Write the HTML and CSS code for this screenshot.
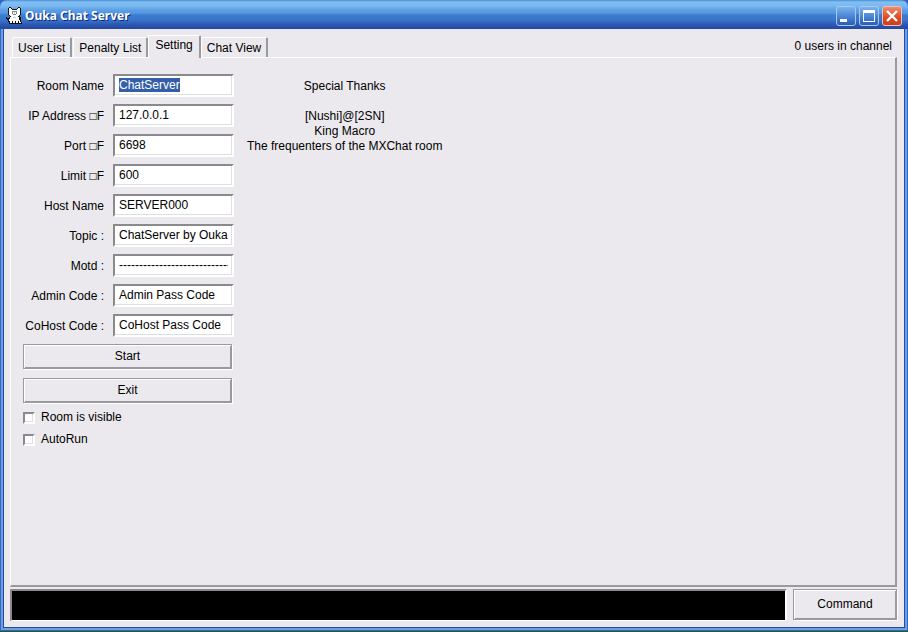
FILE: index.html
```html
<!DOCTYPE html>
<html lang="en">
<head>
<meta charset="utf-8">
<title>Ouka Chat Server</title>
<link rel="stylesheet" href="styles.css">
</head>
<body>
<div class="window">
  <header class="titlebar">
    <svg class="cat" viewBox="0 0 16 17" shape-rendering="crispEdges" aria-hidden="true">
      <path fill="#111" d="M3 0h2v1h1v1h5V1h1V0h2v1h1v7h-1v2h1v5h1v2H3v-2H2v-2H1v-1H0v-2h1v1h2v-1h1V9H3V8H2V1h1z"/>
      <path fill="#fff" d="M3 1h2v1h1v1h5V2h1V1h2v7h-1v1h-1v1h1v3h1v2h1v1h-2v-2h-1v2h-2v-2h-1v2H7v-2H6v2H4v-2H3v-2h1v-2h1V9H4V8H3z"/>
      <path fill="#888" d="M6 4h5v1H6zM6 5h1v2H6zM10 5h1v2h-1zM7 7h3v1H7z"/>
      <path fill="#ccc" d="M8 5h1v2H8zM7 10h3v1H7z"/>
    </svg>
    <h1 class="title">Ouka Chat Server</h1>
    <div class="controls">
      <button class="control" type="button" aria-label="Minimize"><svg viewBox="0 0 18 18" shape-rendering="crispEdges"><path fill="#fff" d="M3 12h7v3H3z"/></svg></button>
      <button class="control" type="button" aria-label="Maximize"><svg viewBox="0 0 18 18" shape-rendering="crispEdges"><path fill="#fff" fill-rule="evenodd" d="M3 3h12v12H3zM4 6v8h10V6z"/></svg></button>
      <button class="control close" type="button" aria-label="Close"><svg viewBox="0 0 18 18"><path stroke="#fff" stroke-width="2.4" d="M4 4l10 10M14 4L4 14"/></svg></button>
    </div>
  </header>
  <main class="client">
    <div class="topline">
      <nav class="tabs" role="tablist">
        <button class="tab" type="button" role="tab">User List</button>
        <button class="tab" type="button" role="tab">Penalty List</button>
        <button class="tab selected" type="button" role="tab" aria-selected="true">Setting</button>
        <button class="tab" type="button" role="tab">Chat View</button>
      </nav>
      <p class="users">0 users in channel</p>
    </div>
    <section class="panel">
      <form class="settings">
        <div class="fields">
          <label for="room">Room Name</label><input class="field" id="room" value="ChatServer">
          <label for="ip">IP Address □F</label><input class="field" id="ip" value="127.0.0.1">
          <label for="port">Port □F</label><input class="field" id="port" value="6698">
          <label for="limit">Limit □F</label><input class="field" id="limit" value="600">
          <label for="host">Host Name</label><input class="field" id="host" value="SERVER000">
          <label for="topic">Topic :</label><input class="field" id="topic" value="ChatServer by Ouka">
          <label for="motd">Motd :</label><input class="field" id="motd" value="----------------------------------------">
          <label for="admin">Admin Code :</label><input class="field" id="admin" value="Admin Pass Code">
          <label for="cohost">CoHost Code :</label><input class="field" id="cohost" value="CoHost Pass Code">
        </div>
        <button class="push" type="button">Start</button>
        <button class="push" type="button">Exit</button>
        <label class="check"><input type="checkbox">Room is visible</label>
        <label class="check"><input type="checkbox">AutoRun</label>
      </form>
      <div class="thanks">
        <p class="heading">Special Thanks</p>
        <p>[Nushi]@[2SN]</p>
        <p>King Macro</p>
        <p>The frequenters of the MXChat room</p>
      </div>
    </section>
    <div class="commandbar">
      <input class="command" aria-label="Command line">
      <button class="push" type="button">Command</button>
    </div>
  </main>
</div>
<script src="script.js"></script>
</body>
</html>
```
FILE: styles.css
```css
* { box-sizing: border-box; }
body {
  margin: 0;
  background: #2d5a10;
  color: #000;
  font: 12px/15px "Liberation Sans", Arial, sans-serif;
}
button, input { font: inherit; color: inherit; }
p, h1 { margin: 0; }
.window {
  height: 100vh;
  display: flex;
  flex-direction: column;
  background: #3465c0;
  border-bottom: 1px solid #2d5a10;
}
.titlebar {
  flex: none;
  height: 29px;
  display: flex;
  align-items: center;
  padding: 2px 6px 0;
  border-radius: 7px 7px 0 0;
  background: linear-gradient(#4c8cda 0, #80c0f2 2px, #7ab8f0 6px, #5c9fe6 10px, #5896e0 13px, #3b7dd0 15px, #3a74c8 20px, #2a56b2 25px, #2448a0 29px);
}
.cat { width: 16px; height: 17px; }
.title {
  margin-left: 3px;
  padding-top: 1px;
  color: #fff;
  font: bold 12px/16px "Noto Sans", "DejaVu Sans", sans-serif;
  text-shadow: 1px 1px 0 #0c2a80;
}
.controls { display: flex; gap: 3px; margin-left: auto; }
.control {
  width: 20px;
  height: 20px;
  padding: 0;
  border: 1px solid #a8c8f0;
  border-radius: 3px;
  background: linear-gradient(#79b4ee, #4c88d8 50%, #2c5cb4);
}
.control svg { display: block; width: 18px; height: 18px; }
.close { border-color: #f0c0b8; background: linear-gradient(#ec8c70, #dc4c24 60%, #c84020); }
.client {
  flex: 1;
  min-height: 0;
  display: flex;
  flex-direction: column;
  margin: 0 3px 3px;
  padding: 6px 7px 6px 6px;
  background: #ebe9ed;
  border: solid #244a9e;
  border-width: 0 1px 1px;
  box-shadow: 0 0 0 2px #6ca0e4;
  clip-path: inset(0 -3px -3px);
}
.topline { display: flex; justify-content: space-between; align-items: flex-end; }
.tabs { display: flex; align-items: flex-end; padding-left: 1px; }
.tab {
  height: 20px;
  margin-left: 1px;
  padding: 1px 5px 0;
  background: #ebe9ed;
  border: solid #fff;
  border-width: 1px 2px 0 1px;
  border-right-color: #9a999e;
  border-radius: 2px 2px 0 0;
}
.selected {
  position: relative;
  height: 23px;
  margin: 0 0 -1px;
  padding: 0 6px 3px;
}
.selected + .tab { margin-left: 0; }
.users { padding: 0 5px 3px 0; }
.panel {
  flex: 1;
  display: flex;
  align-items: flex-start;
  padding: 16px 12px;
  border: solid #fff;
  border-width: 1px 2px 2px 1px;
  border-right-color: #9a999e;
  border-bottom-color: #9a999e;
}
.settings { width: 211px; }
.fields {
  display: grid;
  grid-template-columns: 81px 1fr;
  column-gap: 9px;
  row-gap: 7px;
  align-items: center;
  text-align: right;
  white-space: nowrap;
}
.fields label { padding-top: 2px; }
.field {
  width: 100%;
  height: 23px;
  padding: 0 4px 2px;
  outline: 0;
  border: 2px solid;
  border-color: #8a898e #fff #fff #8a898e;
  background: #fff;
  box-shadow: inset -1px -1px #dcdfe4;
}
.field::selection { background: #335ea8; color: #fff; }
.push {
  display: block;
  padding: 0;
  background: #ebe9ed;
  border: 1px solid #9a999e;
  box-shadow: inset 1px 1px #fff, inset -1px -1px #9a999e, 1px 1px #fff;
}
.settings .push { width: 209px; height: 25px; margin: 7px 0 9px; }
.settings .push + .push { margin-bottom: 7px; }
.check { display: flex; align-items: center; gap: 6px; margin-bottom: 7px; }
.check input {
  appearance: none;
  width: 12px;
  height: 12px;
  margin: 0;
  background: #fff;
  border: 2px solid;
  border-color: #8a898e #fff #fff #8a898e;
  box-shadow: inset -1px -1px #dcdfe4;
}
.thanks { margin: 5px 0 0 13px; text-align: center; }
.heading { margin-bottom: 15px; }
.commandbar { display: flex; gap: 6px; margin-top: 2px; }
.command {
  flex: 1;
  min-width: 0;
  height: 32px;
  background: #000;
  color: #fff;
  border: solid;
  border-width: 2px 2px 1px 2px;
  border-color: #8a898e #fff #fff #8a898e;
}
.commandbar .push { width: 104px; height: 31px; }
```
FILE: script.js
```js
const room = document.getElementById("room");
room.focus();
room.select();
```
